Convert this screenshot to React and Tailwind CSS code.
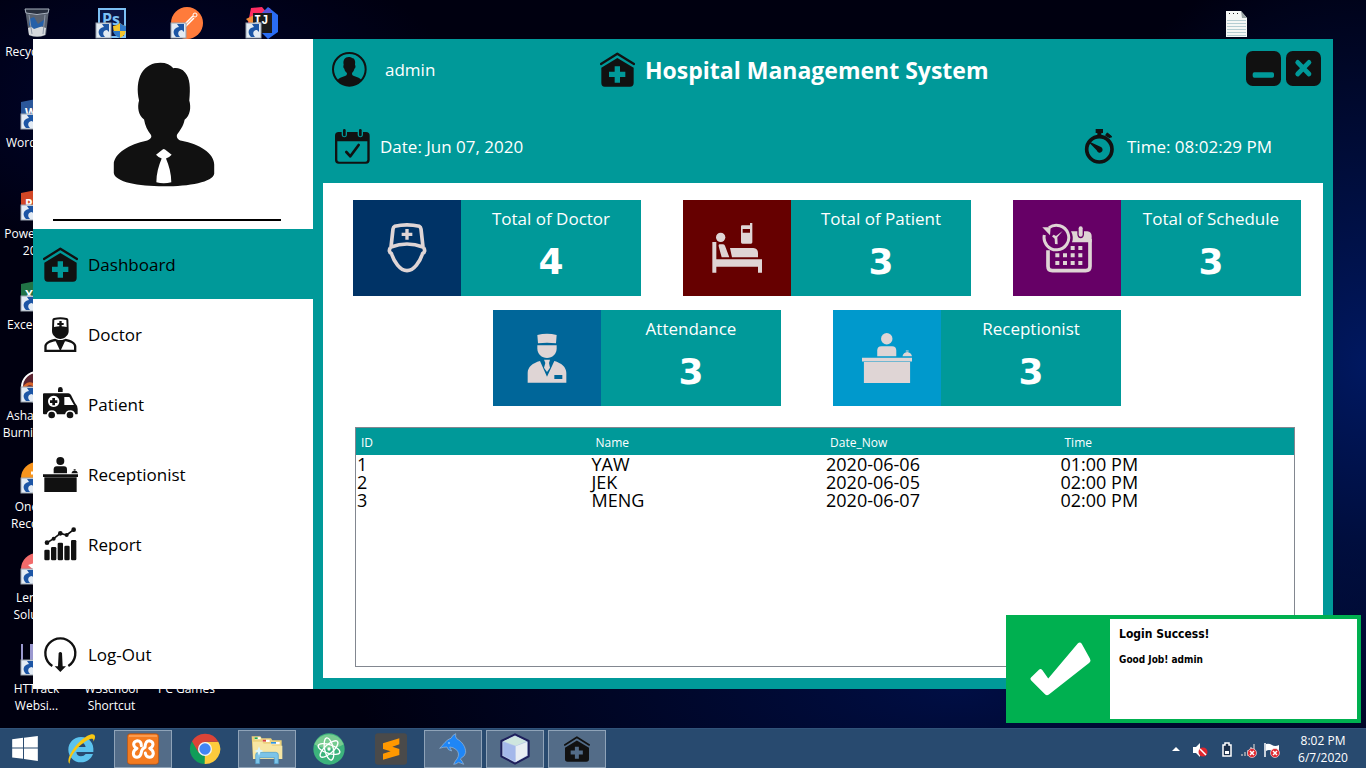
import React from "react";

/* ---------- Application icons ---------- */

function Svg({ box = "0 0 105 105", className = "size-[35px]", children }) {
  return (
    <svg viewBox={box} className={`shrink-0 ${className}`} fill="currentColor" aria-hidden="true">
      {children}
    </svg>
  );
}

function HospitalIcon({ className }) {
  return (
    <Svg className={className}>
      <path d="M3 36 52 5l50 31" fill="none" stroke="currentColor" strokeWidth="7" strokeLinecap="round" strokeLinejoin="round" />
      <path
        fillRule="evenodd"
        d="M52 18 101 47V93Q101 104 90 104H14Q4 104 4 93V47ZM44 43V59H27V75H44V92H60V75H76V59H60V43Z"
      />
    </Svg>
  );
}

function DoctorIcon() {
  return (
    <Svg>
      <path
        fillRule="evenodd"
        d="M28 8Q29 4 33 3Q52-2 71 3Q75 4 76 8L77 42C77 54 66 65 52 66C38 65 27 54 27 42ZM34 9 33 30Q52 26 71 30L70 9Q52 4 34 9Z"
      />
      <path d="M49 12h7v6h6v6h-6v6h-7v-6h-6v-6h6z" />
      <path
        fillRule="evenodd"
        d="M4 105V88C4 76 20 68 36 65L46 69H58L68 65C84 68 100 76 100 88V105ZM11 98H50L38 73C24 75 11 80 11 89ZM54 98H93V89C93 80 80 75 66 73Z"
      />
    </Svg>
  );
}

function AmbulanceIcon() {
  return (
    <Svg>
      <path d="M45 15V7Q45 0 52 0T59 7V15Z" />
      <path
        fillRule="evenodd"
        d="M3 19H76Q81 19 84 24L96 48Q104 56 104 66V80Q104 82 101 82H97A16 16 0 0 0 66 82H42A16 16 0 0 0 11 82H3Q0 82 0 79V22Q0 19 3 19ZM64 30V54H93L79 30ZM32 26A17 17 0 1 0 32.100 26Z"
      />
      <path d="M28 33h8v7h7v8h-7v7h-8v-7h-7v-8h7z" />
      <circle cx="26" cy="84" r="10" />
      <circle cx="81" cy="84" r="10" />
    </Svg>
  );
}

function ReceptionistIcon({ className }) {
  return (
    <Svg className={className}>
      <circle cx="52" cy="12" r="12" />
      <path d="M32 49V37Q32 28 41 28H63Q72 28 72 37V49Z" />
      <path d="M85 49Q87 41 95 40Q103 41 105 49ZM92 37h6v2h-6z" />
      <path d="M0 52H105V60H0ZM4 61H101V105H4Z" />
    </Svg>
  );
}

function ReportIcon() {
  return (
    <Svg>
      <rect x="4" y="68" width="16" height="32" rx="4" />
      <rect x="24" y="60" width="16" height="40" rx="4" />
      <rect x="44" y="47" width="16" height="53" rx="4" />
      <rect x="64" y="56" width="16" height="44" rx="4" />
      <rect x="84" y="39" width="16" height="61" rx="4" />
      <path d="M12 47 32 35 52 19 71 24 92 8" fill="none" stroke="currentColor" strokeWidth="5" />
      <circle cx="12" cy="47" r="7" />
      <circle cx="32" cy="35" r="6" />
      <circle cx="52" cy="19" r="7" />
      <circle cx="71" cy="24" r="6" />
      <circle cx="92" cy="8" r="7" />
    </Svg>
  );
}

function LogOutIcon() {
  return (
    <Svg>
      <path d="M28 87A45 45 0 1 1 76 87" fill="none" stroke="currentColor" strokeWidth="7" />
      <path d="M47 48Q52 42 57 48L59 88H69L52 105 35 88H45Z" />
    </Svg>
  );
}

function UserIcon() {
  return (
    <Svg>
      <circle cx="52" cy="52" r="49" fill="none" stroke="currentColor" strokeWidth="6" />
      <path d="M50 15C54 15 58 16 60 18C68 19 71 26 69 38C72 42 70 49 67 50C66 56 63 60 60 63C60 70 62 71 68 73C76 76 85 79 88 84C80 97 66 101 52 101S25 97 17 84C20 79 29 76 37 73C43 71 45 69 45 63C41 60 38 56 37 50C34 48 33 43 35 38C32 24 39 15 50 15Z" />
    </Svg>
  );
}

function CalendarIcon() {
  return (
    <Svg>
      <path
        fillRule="evenodd"
        d="M11 9H20V16Q20 25 28 25T36 16V9H68V16Q68 25 76 25T84 16V9H93Q104 9 104 20V93Q104 104 93 104H11Q0 104 0 93V20Q0 9 11 9ZM7 37V92Q7 98 13 98H91Q97 98 97 92V37Z"
      />
      <rect x="24" y="0" width="8" height="22" rx="4" />
      <rect x="72" y="0" width="8" height="22" rx="4" />
      <path d="M34 69 46 82 71 48" fill="none" stroke="currentColor" strokeWidth="8" strokeLinecap="round" strokeLinejoin="round" />
    </Svg>
  );
}

function StopwatchIcon() {
  return (
    <Svg>
      <circle cx="52" cy="61" r="38" fill="none" stroke="currentColor" strokeWidth="11" />
      <path d="M41 0H63V12H58V20H46V12H41ZM72 22 69 18 76 12 88 22 83 28Z" />
      <path d="M76 14 87 23" stroke="currentColor" strokeWidth="6" strokeLinecap="round" />
      <path d="M22 41 26 40 57 54A9 9 0 1 1 44 64Z" />
    </Svg>
  );
}

function Portrait() {
  return (
    <Svg box="340 184 306 376" className="h-[125px] w-[102px]">
      <path d="M482 186C500 186 513 192 521 203C530 201 545 202 557 216C571 232 573 260 569 300C575 320 572 345 555 358C551 378 540 392 532 403C530 412 535 419 546 421C600 430 644 460 644 492V520C640 545 570 558 492 558C415 558 346 545 342 518V492C342 460 390 430 440 421C453 416 458 410 453 402C443 390 436 375 433 357C416 345 412 320 418 300C411 270 413 240 425 218C438 195 460 186 482 186Z" />
      <path fill="#fff" d="M489 447Q492 445 496 447L516 463Q508 472 499 474C508 495 515 520 515 546Q492 552 470 546C470 520 477 495 486 474Q477 472 469 463Z" />
    </Svg>
  );
}

/* ---------- Card icons ---------- */

const big = "0 0 150 150";

function NurseFaceIcon() {
  return (
    <Svg box={big} className="size-[50px]">
      <g fill="none" stroke="currentColor" strokeWidth="11" strokeLinejoin="round">
        <path d="M38 10Q75 1 112 10Q116 12 117 18L123 72Q75 54 27 72L33 18Q34 12 38 10Z" />
        <path d="M25 74Q18 86 28 91C36 116 54 143 75 143S114 116 122 91Q132 86 125 74" />
      </g>
      <path d="M70 18h10v11h11v10H80v11H70V39H59V29h11z" />
    </Svg>
  );
}

function BedIcon() {
  return (
    <Svg box={big} className="size-[50px]">
      <circle cx="26" cy="43" r="14" />
      <path d="M1 57H13V109H150V149H138V131H13V149H1ZM22 64H32Q37 64 39 68L52 103H29L20 70Q19 65 22 64ZM54 75H124Q138 76 138 90V103H60Z" />
      <path fillRule="evenodd" d="M90 7H114V0H121V58Q121 62 117 62H91Q87 62 87 58V10Q87 7 90 7ZM92 18V29H114V18Z" />
    </Svg>
  );
}

function ScheduleIcon() {
  return (
    <Svg box={big} className="size-[50px]">
      <path d="M18 82V130Q18 143 31 143H131Q144 143 144 130V48" fill="none" stroke="currentColor" strokeWidth="11" />
      <path d="M87 25H106V34Q107 46 116 46T126 34V25H136Q149 27 149 39V58H90Q96 42 87 25Z" />
      <rect x="110" y="10" width="12" height="31" rx="6" />
      <path d="M7 36A37 37 0 1 0 21 14" fill="none" stroke="currentColor" strokeWidth="9" />
      <path d="M1 13H26L24 37Z" />
      <path d="M62 24 46 43 47 64 39 63 38 47 30 40 35 35 42 39Z" />
      <path d="M86 69h12v12H86zM109 69h12v12h-12zM40 91h12v12H40zM63 91h12v12H63zM86 91h12v12H86zM109 91h12v12h-12zM40 114h12v12H40zM63 114h12v12H63zM86 114h12v12H86zM109 114h12v12h-12z" />
    </Svg>
  );
}

function AttendantIcon() {
  return (
    <Svg box={big} className="size-[50px]">
      <path d="M46 6Q75-2 104 6L102 31Q75 28 48 31Z" />
      <path d="M46 37H104V46C104 64 91 75 75 75S46 64 46 46Z" />
      <path fillRule="evenodd" d="M54 84 75 131 97 84C118 90 133 102 133 120V149H17V120C17 102 32 90 54 84ZM97 126V138H121V126Z" />
      <path d="M66 80H84L81 90 84 104 75 117 66 104 70 90Z" />
    </Svg>
  );
}

/* ---------- Desktop ---------- */

function Shortcut() {
  return (
    <>
      <rect x="0" y="16" width="15" height="15" fill="#e3ebf4" stroke="#9aa4b0" />
      <path d="M5 30C1 26 2 21 8 20L6 17H13V25L11 23C7 23 6 27 9 30Z" fill="#1c55a5" />
    </>
  );
}

function Tile({ shortcut = true, children }) {
  return (
    <svg viewBox="0 0 32 32" className="size-8 shrink-0 overflow-visible" aria-hidden="true">
      {children}
      {shortcut && <Shortcut />}
    </svg>
  );
}

function OfficeTile({ color, letter }) {
  return (
    <Tile>
      <path d="M0 4 20 0V32L0 28Z" fill={color} />
      <path d="M20 5H31V27H20Z" fill="#fff" stroke={color} />
      <text x="4" y="19" fill="#fff" fontSize="12" fontWeight="700" fontFamily="Open Sans, sans-serif">{letter}</text>
    </Tile>
  );
}

const desktopItems = [
  {
    label: "Recycle Bin",
    icon: (
      <Tile shortcut={false}>
        <path d="M4 2H28L25 28Q16 32 8 28Z" fill="#59616f" />
        <path d="M4 2H28L27 6Q16 9 5 6Z" fill="#29303f" stroke="#a9b2bf" />
        <path d="M7 21Q16 17 25 21L24 28Q16 31 8 28Z" fill="#d5d8dc" />
        <path d="M8 12 13 10 17 17 24 12 22 19 13 22 8 18Z" fill="#2660a8" />
        <path d="M8 8 11 27M24 8 22 27" stroke="#8d97a7" />
      </Tile>
    ),
  },
  { label: "Word 2013", icon: <OfficeTile color="#2b579a" letter="W" /> },
  { label: "PowerPoint 2013", icon: <OfficeTile color="#d24726" letter="P" /> },
  { label: "Excel 2013", icon: <OfficeTile color="#217346" letter="X" /> },
  {
    label: "Ashampoo Burning St...",
    icon: (
      <Tile>
        <circle cx="16" cy="16" r="15" fill="#5b2330" stroke="#fff" strokeWidth="2" />
        <path d="M2 18Q8 8 16 17T30 14" stroke="#d9652b" strokeWidth="3" fill="none" />
      </Tile>
    ),
  },
  {
    label: "OneKey Recovery",
    icon: (
      <Tile>
        <circle cx="16" cy="16" r="16" fill="#f7941d" />
        <path d="M10 11H22M12 16H22" stroke="#fff" strokeWidth="3" />
      </Tile>
    ),
  },
  {
    label: "Lenovo Solution",
    icon: (
      <Tile>
        <circle cx="16" cy="16" r="16" fill="#f26b6b" />
        <path d="M7 12 20 8 14 18Z" fill="#fff" />
      </Tile>
    ),
  },
  {
    label: "HTTrack Websi...",
    icon: (
      <Tile>
        <path d="M0 0H2V16H0ZM9 0H13V12H20V16H9Z" fill="#9a98cf" />
      </Tile>
    ),
  },
];

const topItems = [
  <Tile key="ps">
    <rect x="3" y="2" width="26" height="28" fill="#0a1544" stroke="#7cc0f5" strokeWidth="2" />
    <text x="6" y="18" fill="#7cc0f5" fontSize="16" fontWeight="700" fontFamily="Open Sans, sans-serif">Ps</text>
    <path d="M17 19Q21 19 24 16Q27 19 30 19Q31 28 24 31Q17 28 17 19Z" fill="#f5c52c" />
    <path d="M24 16Q27 19 30 19L30 24H24ZM17 24H24V31Q18 29 17 24Z" fill="#2f78c8" />
  </Tile>,
  <Tile key="pm">
    <circle cx="16" cy="16" r="16" fill="#ff7b3b" />
    <circle cx="24" cy="8" r="2" fill="none" stroke="#fff" />
    <path d="M22 9 12 19M23 11 14 20" stroke="#fff" strokeWidth="1.500" />
  </Tile>,
  <Tile key="ij">
    <path d="M5 1 16 0 22 7 18 20 2 16Z" fill="#fe2d63" />
    <path d="M0 12 8 8V20Z" fill="#f58c3a" />
    <path d="M22 0 32 8V25L22 32 14 24 16 6Z" fill="#2a6df4" />
    <path d="M18 4 24 1 26 9 18 12Z" fill="#5b54d9" />
    <rect x="7" y="6" width="19" height="20" fill="#1b1b1b" />
    <text x="8" y="17" fill="#fff" fontSize="12" fontWeight="700" fontFamily="Liberation Mono, monospace">IJ</text>
  </Tile>,
];

function DesktopItem({ label, icon }) {
  return (
    <li className="flex h-[91px] w-[75px] flex-col items-center gap-1 pt-[7px] pr-0.5">
      {icon}
      <span className="w-[70px] text-center text-xs leading-[17px] text-white">{label}</span>
    </li>
  );
}

function Desktop() {
  return (
    <div className="absolute inset-0 flex justify-between">
      <div className="flex">
        <ul>
          {desktopItems.map((item) => (
            <DesktopItem key={item.label} {...item} />
          ))}
        </ul>
        <div className="flex flex-col justify-between">
          <ul className="flex">
            {topItems.map((icon) => (
              <DesktopItem key={icon.key} icon={icon} />
            ))}
          </ul>
          <ul className="flex">
            <DesktopItem label="W3school Shortcut" icon={<Tile />} />
            <DesktopItem label="PC Games" icon={<Tile />} />
          </ul>
        </div>
      </div>
      <svg viewBox="0 0 21 26" className="mt-[11px] mr-[119px] h-[26px] w-[21px]" aria-hidden="true">
        <path d="M0 0H15L21 7V26H0Z" fill="#f5f7f5" />
        <path d="M1 9.500H20M1 12.500H20M1 15.500H20M1 18.500H20M1 21.500H20M1 24.500H20" stroke="#b5cdd2" />
        <path d="M15 0 21 7H16Z" fill="#9aa5a5" />
        <path d="M3 2h1v1H3zM7 2h1v1H7zM11 2h1v1h-1z" fill="#222" />
      </svg>
    </div>
  );
}

/* ---------- Hospital window ---------- */

const navItems = [
  { label: "Dashboard", icon: <HospitalIcon />, active: true },
  { label: "Doctor", icon: <DoctorIcon /> },
  { label: "Patient", icon: <AmbulanceIcon /> },
  { label: "Receptionist", icon: <ReceptionistIcon /> },
  { label: "Report", icon: <ReportIcon /> },
];

function NavButton({ label, icon, active }) {
  return (
    <button
      type="button"
      aria-current={active ? "page" : undefined}
      className={`flex h-[70px] w-full items-center gap-[10px] pl-[10px] text-left text-[17px] leading-6 text-black ${active ? "bg-[#009999]" : "bg-white"}`}
    >
      <span className="text-[#111]">{icon}</span>
      <span className="pt-0.5">{label}</span>
    </button>
  );
}

function Sidebar() {
  return (
    <aside className="flex w-[280px] shrink-0 flex-col bg-white">
      <div className="h-[190px] shrink-0 pt-[23px] pr-8 pl-5 text-[#111]">
        <div className="flex h-[159px] justify-center border-b-2 border-black pr-1.5">
          <Portrait />
        </div>
      </div>
      <nav className="flex flex-1 flex-col">
        {navItems.map((item) => (
          <NavButton key={item.label} {...item} />
        ))}
        <div className="mt-auto">
          <NavButton label="Log-Out" icon={<LogOutIcon />} />
        </div>
      </nav>
    </aside>
  );
}

function Header() {
  return (
    <header className="h-36 shrink-0 pt-3 text-[17px] leading-6 text-white">
      <div className="flex h-9 items-end pr-3 pl-[19px]">
        <div className="flex w-[268px] items-center gap-[18px]">
          <span className="text-[#111]"><UserIcon /></span>
          <span>admin</span>
        </div>
        <div className="flex items-center gap-[10px]">
          <span className="text-[#111]"><HospitalIcon /></span>
          <h1 className="text-[23px] leading-8 font-bold whitespace-nowrap">Hospital Management System</h1>
        </div>
        <div className="ml-auto flex gap-[5px] self-start text-[#111]">
          <button type="button" aria-label="Minimize">
            <Svg>
              <rect width="105" height="105" rx="20" />
              <rect x="20" y="64" width="64" height="16" rx="5" fill="#099" />
            </Svg>
          </button>
          <button type="button" aria-label="Close">
            <Svg>
              <rect width="105" height="105" rx="20" />
              <path d="M35 34 69 69M69 34 35 69" stroke="#099" strokeWidth="14" strokeLinecap="round" />
            </Svg>
          </button>
        </div>
      </div>
      <div className="mt-[42px] flex h-[35px] items-center justify-between pr-[60px] pl-[22px]">
        <div className="flex items-center gap-[10px]">
          <span className="text-[#111]"><CalendarIcon /></span>
          <span>Date: Jun 07, 2020</span>
        </div>
        <div className="flex w-[191px] items-center gap-[10px] whitespace-nowrap">
          <span className="text-[#111]"><StopwatchIcon /></span>
          <span>Time: 08:02:29 PM</span>
        </div>
      </div>
    </header>
  );
}

function StatCard({ label, value, color, icon }) {
  return (
    <section className="flex h-24 w-[288px] bg-[#009999] text-white">
      <div className={`flex w-[108px] shrink-0 items-center justify-center text-[#dfd5d5] ${color}`}>{icon}</div>
      <div className="flex flex-1 flex-col items-center pt-1.5">
        <h2 className="text-[17px] leading-[26px] whitespace-nowrap">{label}</h2>
        <p className="pt-[10px] font-['DejaVu_Sans'] text-4xl leading-10 font-bold">{value}</p>
      </div>
    </section>
  );
}

const rows = [
  ["1", "YAW", "2020-06-06", "01:00 PM"],
  ["2", "JEK", "2020-06-05", "02:00 PM"],
  ["3", "MENG", "2020-06-07", "02:00 PM"],
];

function ScheduleTable() {
  return (
    <div className="mt-[21px] mr-1.5 ml-0.5 flex-1 border border-[#828790]">
      <table className="w-full table-fixed text-left">
        <thead className="bg-[#009999] text-xs text-white">
          <tr className="h-[27px]">
            {["ID", "Name", "Date_Now", "Time"].map((head) => (
              <th key={head} scope="col" className="pt-0.5 pl-[5px] font-normal">{head}</th>
            ))}
          </tr>
        </thead>
        <tbody className="text-lg leading-[18px] text-black">
          {rows.map((row) => (
            <tr key={row[0]}>
              {row.map((cell) => (
                <td key={cell} className="pl-px">{cell}</td>
              ))}
            </tr>
          ))}
        </tbody>
      </table>
    </div>
  );
}

function HospitalWindow() {
  return (
    <div className="absolute inset-x-[33px] inset-y-[39px] flex bg-[#009999]">
      <Sidebar />
      <main className="flex flex-1 flex-col">
        <Header />
        <div className="mx-[10px] mb-[11px] flex flex-1 flex-col bg-white pt-[17px] pr-[22px] pb-[11px] pl-[30px]">
          <div className="flex justify-between">
            <StatCard label="Total of Doctor" value="4" color="bg-[#003366]" icon={<NurseFaceIcon />} />
            <StatCard label="Total of Patient" value="3" color="bg-[#660000]" icon={<BedIcon />} />
            <StatCard label="Total of Schedule" value="3" color="bg-[#660066]" icon={<ScheduleIcon />} />
          </div>
          <div className="flex justify-center gap-[52px] pt-3.5 pr-10">
            <StatCard label="Attendance" value="3" color="bg-[#006699]" icon={<AttendantIcon />} />
            <StatCard label="Receptionist" value="3" color="bg-[#0099cc]" icon={<ReceptionistIcon className="size-[50px]" />} />
          </div>
          <ScheduleTable />
        </div>
      </main>
    </div>
  );
}

function Toast() {
  return (
    <div role="status" className="absolute right-[5px] bottom-[5px] flex h-[108px] w-[355px] border-4 border-[#00b050] bg-white text-black">
      <div className="flex w-[100px] shrink-0 items-center justify-center bg-[#00b050]">
        <svg viewBox="115 127 190 168" className="h-14 w-[63px]" fill="#fff" aria-hidden="true">
          <path d="M121 237 145 213Q150 208 155 214L173 240 262 134Q269 127 274 135L299 180Q303 187 297 192L175 288Q169 293 164 288L121 245Q117 241 121 237Z" />
        </svg>
      </div>
      <div className="pt-[7px] pl-[9px] font-['DejaVu_Sans_Condensed','DejaVu_Sans',sans-serif] font-bold">
        <p className="text-xs leading-4">Login Success!</p>
        <p className="pt-2.5 text-[10px] leading-4">Good Job! admin</p>
      </div>
    </div>
  );
}

/* ---------- Taskbar ---------- */

function AppIcon({ children }) {
  return <svg viewBox="0 0 96 96" className="size-8" aria-hidden="true">{children}</svg>;
}

const taskbarApps = [
  {
    name: "Internet Explorer",
    icon: (
      <AppIcon>
        <path d="M48 12C26 12 10 30 10 50S26 88 48 88C66 88 78 78 84 63H62Q57 70 48 70Q36 70 34 57H85C88 30 72 12 48 12ZM35 42Q39 29 49 29T62 42Z" fill="#5cc3ee" />
        <path d="M14 92C2 84 20 48 44 26S88-2 90 10C91 15 88 21 85 26C88 10 70 18 50 34S14 74 14 92Z" fill="#f8c712" />
      </AppIcon>
    ),
  },
  {
    name: "XAMPP",
    open: true,
    icon: (
      <AppIcon>
        <rect x="1" y="2" width="94" height="92" rx="9" fill="#f47b20" stroke="#a84b13" strokeWidth="2" />
        <path d="M6 6H90V12H6Z" fill="#fb9b4f" />
        <path
          d="M43 38Q43 23 31 23Q20 25 20 34Q21 43 30 46Q19 51 19 62Q20 73 30 73Q41 72 43 58Q44 47 54 43Q55 23 67 23Q78 25 78 34Q77 43 68 46Q79 51 79 62Q77 73 67 73Q56 72 55 60"
          fill="none"
          stroke="#fff"
          strokeWidth="9"
          strokeLinejoin="round"
          strokeLinecap="round"
        />
      </AppIcon>
    ),
  },
  {
    name: "Chrome",
    icon: (
      <AppIcon>
        <path d="M48 48 9 25A45 45 0 0 0 47 93L67 59Z" fill="#109d58" />
        <path d="M48 48 47 93A45 45 0 0 0 88 26H48Z" fill="#fdcb3c" />
        <path d="M48 26H88A45 45 0 0 0 9 25L29 59Z" fill="#dc4437" />
        <circle cx="48" cy="48" r="21" fill="#f4f4f4" />
        <circle cx="48" cy="48" r="17" fill="#4285f4" />
      </AppIcon>
    ),
  },
  {
    name: "File Explorer",
    open: true,
    icon: (
      <AppIcon>
        <path d="M2 10H28L32 16H60L64 22H92V78H6Z" fill="#ecd27c" />
        <path d="M11 13H29V19H11ZM35 20H56V27H35ZM60 27H86V34H60Z" fill="#fff" />
        <path d="M11 13h9v5h-9z" fill="#21a54b" />
        <path d="M35 20h10v6H35z" fill="#d8453b" />
        <path d="M60 27h15v5H60z" fill="#2d93e0" />
        <path d="M6 26H34L38 32H60L64 38H94V78H6Z" fill="#f7e6a3" />
        <path d="M14 92V66Q14 58 22 58H74Q82 58 82 66V92H70V74H26V92Z" fill="#7cc4e8" stroke="#4c9bc9" strokeWidth="2" />
        <path d="M24 40 28 50 38 54 28 58 24 68 20 58 10 54 20 50Z" fill="#d8f5ff" />
      </AppIcon>
    ),
  },
  {
    name: "Atom",
    icon: (
      <AppIcon>
        <circle cx="48" cy="48" r="47" fill="#3cb37c" />
        <path d="M4 34A47 47 0 0 1 92 34Q48 60 4 34Z" fill="#78cc91" />
        <g fill="none" stroke="#fff" strokeWidth="4">
          <ellipse cx="48" cy="48" rx="34" ry="13" transform="rotate(18 48 48)" />
          <ellipse cx="48" cy="48" rx="34" ry="13" transform="rotate(78 48 48)" />
          <ellipse cx="48" cy="48" rx="34" ry="13" transform="rotate(138 48 48)" />
        </g>
        <circle cx="48" cy="48" r="5" fill="#fff" />
      </AppIcon>
    ),
  },
  {
    name: "Sublime Text",
    icon: (
      <AppIcon>
        <rect x="0" y="1" width="96" height="94" rx="9" fill="#4a4a4a" />
        <path d="M24 31 73 16V34L52 41 73 48V66L24 80V62L47 55 24 48Z" fill="#ff9800" />
      </AppIcon>
    ),
  },
  {
    name: "MySQL Workbench",
    open: true,
    icon: (
      <AppIcon>
        <path
          d="M8 46C20 34 28 20 42 16Q46 6 56 2Q54 12 60 18C76 26 86 42 86 58L82 68Q74 74 70 78Q76 84 80 94Q70 90 64 88Q58 94 50 94Q54 84 60 78Q70 62 58 50Q48 42 38 42L44 54Q32 52 30 42Q18 42 8 46Z"
          fill="#1f86f6"
          stroke="#9fb9d4"
          strokeWidth="2"
        />
        <circle cx="36" cy="30" r="2" fill="#fff" />
      </AppIcon>
    ),
  },
  {
    name: "NetBeans",
    open: true,
    icon: (
      <AppIcon>
        <path d="M48 4 89 24V70L48 92 7 70V24Z" fill="#b9c9e8" stroke="#1e1f5b" strokeWidth="6" strokeLinejoin="round" />
        <path d="M48 9 82 25 50 38 13 25Z" fill="#cfe6df" />
        <path d="M13 27 50 40V87L13 67Z" fill="#a4b8ea" />
        <path d="M50 40 84 27V67L50 87Z" fill="#e9eef3" />
      </AppIcon>
    ),
  },
  {
    name: "Hospital Management System",
    open: true,
    icon: <span className="text-[#111]"><HospitalIcon className="size-[26px]" /></span>,
  },
];

function Blocked({ x, y }) {
  return (
    <g>
      <circle cx={x} cy={y} r="4.500" fill="#e0262d" stroke="#fff" strokeWidth=".6" />
      <path d={`M${x - 2} ${y - 2}l4 4m0-4l-4 4`} stroke="#fff" strokeWidth="1.500" />
    </g>
  );
}

function Taskbar() {
  return (
    <footer className="flex h-10 shrink-0 items-center justify-between border-t border-[#31537a] bg-[#284a6f]">
      <div className="flex">
        <button type="button" aria-label="Start" className="flex w-[50px] items-center pl-3">
          <svg viewBox="0 0 78 76" className="h-[25px] w-[26px]" fill="#fff" aria-hidden="true">
            <path d="M0 10 33 5V35H0ZM36 5 78 0V35H36ZM0 38H33V69L0 65ZM36 38H78V76L36 70Z" />
          </svg>
        </button>
        {taskbarApps.map((app) => (
          <button
            key={app.name}
            type="button"
            aria-label={app.name}
            className={`mx-0.5 flex h-[38px] w-[58px] items-center justify-center border ${app.open ? "border-[#8fa3b8] bg-[#536c88]" : "border-transparent"}`}
          >
            {app.icon}
          </button>
        ))}
      </div>
      <div className="flex items-center gap-4 pr-[18px] text-xs leading-[17px] text-white">
        <svg viewBox="0 0 110 18" className="h-[18px] w-[110px]" aria-hidden="true">
          <path d="M0 11 4 7 8 11Z" fill="#fff" />
          <path d="M21 7H24L28 3V17L24 13H21Z" fill="#fff" />
          <circle cx="31" cy="12" r="4.500" fill="#e0262d" />
          <path d="M28 9 34 15" stroke="#fff" strokeWidth="1.500" />
          <path d="M53 3H57V5H59V16H51V5H53Z" fill="#1b2f4a" stroke="#fff" strokeWidth="1.500" />
          <path d="M53 11h4v3h-4z" fill="#fff" />
          <path d="M69 14h2v2h-2zM72 12h2v4h-2zM75 10h2v6h-2zM78 7h2v9h-2zM81 4h2v12h-2z" fill="#8d98a5" />
          <Blocked x={80} y={13} />
          <path d="M93 3V17" stroke="#fff" strokeWidth="1.500" />
          <path d="M94 4Q97 3 100 5T107 5V12Q103 13 100 11T94 11Z" fill="#fff" />
          <Blocked x={103} y={13} />
        </svg>
        <div className="w-[50px] text-center whitespace-nowrap">
          <p>8:02 PM</p>
          <p>6/7/2020</p>
        </div>
      </div>
    </footer>
  );
}

export default function App() {
  return (
    <div className="flex min-h-screen flex-col bg-[#000010] font-['Open_Sans','Noto_Sans',sans-serif]">
      <div className="relative min-h-[728px] flex-1 overflow-hidden bg-[radial-gradient(ellipse_340px_420px_at_100%_50%,#001860,transparent),radial-gradient(ellipse_600px_200px_at_70%_95%,#000e44,transparent),radial-gradient(ellipse_300px_160px_at_12%_14%,#000530,transparent)]">
        <Desktop />
        <HospitalWindow />
        <Toast />
      </div>
      <Taskbar />
    </div>
  );
}
